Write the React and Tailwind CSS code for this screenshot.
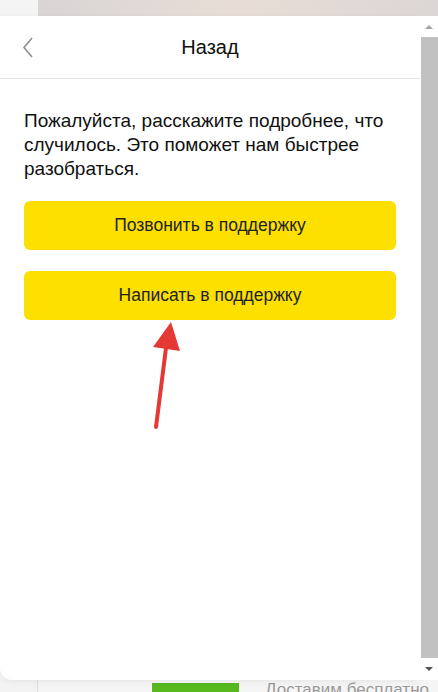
import React from 'react';

const Arrow = () => (
    <svg className="absolute left-0 top-0" width="438" height="692" viewBox="0 0 438 692">
        <line x1="156" y1="427" x2="167" y2="340" stroke="#e53935" strokeWidth="4" strokeLinecap="round" />
        <polygon points="171,322 153,347 180,351" fill="#e53935" />
    </svg>
);

const App = () => {
    return (
        <div className="relative w-[438px] h-[692px] overflow-hidden bg-[#f5f5f5] font-['Liberation_Sans',Arial,sans-serif]">
            {/* background page */}
            <div className="flex h-[17px]">
                <div className="w-[38px] bg-[#f4f4f4]" />
                <div className="flex-1 bg-gradient-to-r from-[#d9d5d5] via-[#e8ddd6] to-[#dcd6d6]" />
            </div>
            <div className="absolute left-0 right-0 top-[680px] h-[12px] flex">
                <div className="w-[38px] shrink-0 border-r border-[#dcdcdc] bg-[#f3f3f3]" />
                <div className="w-[114px] shrink-0" />
                <div className="w-[87px] shrink-0 mt-[3px] bg-[#57b91e]" />
                <div className="pl-[26px] -mt-[1px] text-[17px] leading-[22px] text-[#9a9a9a] whitespace-nowrap">
                    Доставим бесплатно
                </div>
            </div>

            {/* modal */}
            <div className="absolute left-0 top-[16px] w-[438px] h-[664px] flex">
                <div className="flex-1 bg-white rounded-bl-[12px] shadow-[0_2px_6px_rgba(0,0,0,0.06)] flex flex-col">
                    <div className="h-[63px] border-b border-[#e6e6e6] flex items-center relative">
                        <svg className="absolute left-[22px] top-[21px]" width="12" height="21" viewBox="0 0 12 21">
                            <polyline points="10,1 2,10.5 10,20" fill="none" stroke="#8f8f8f" strokeWidth="1.6" />
                        </svg>
                        <div className="w-full text-center text-[20px] text-[#111]">Назад</div>
                    </div>
                    <div className="px-[24px] pt-[30px]">
                        <p className="text-[19px] leading-[24px] text-[#111]">
                            Пожалуйста, расскажите подробнее, что случилось. Это поможет нам быстрее разобраться.
                        </p>
                        <div className="mt-[20px] flex flex-col gap-[21px] w-[372px]">
                            <button className="h-[49px] rounded-[6px] bg-[#fddf00] text-[17.5px] text-[#222]">
                                Позвонить в поддержку
                            </button>
                            <button className="h-[49px] rounded-[6px] bg-[#fddf00] text-[17.5px] text-[#222]">
                                Написать в поддержку
                            </button>
                        </div>
                    </div>
                </div>
                {/* scrollbar */}
                <div className="w-[18px] bg-white flex flex-col items-center">
                    <div className="h-[21px] flex items-center justify-center">
                        <div className="w-0 h-0 border-l-[4px] border-r-[4px] border-b-[4px] border-l-transparent border-r-transparent border-b-[#a3a3a3]" />
                    </div>
                    <div className="w-[17px] flex-1 bg-[#c1c1c1]" />
                    <div className="h-[22px] flex items-center justify-center">
                        <div className="w-0 h-0 border-l-[4px] border-r-[4px] border-t-[4px] border-l-transparent border-r-transparent border-t-[#505050]" />
                    </div>
                </div>
            </div>

            <Arrow />
        </div>
    );
};

export default App;
